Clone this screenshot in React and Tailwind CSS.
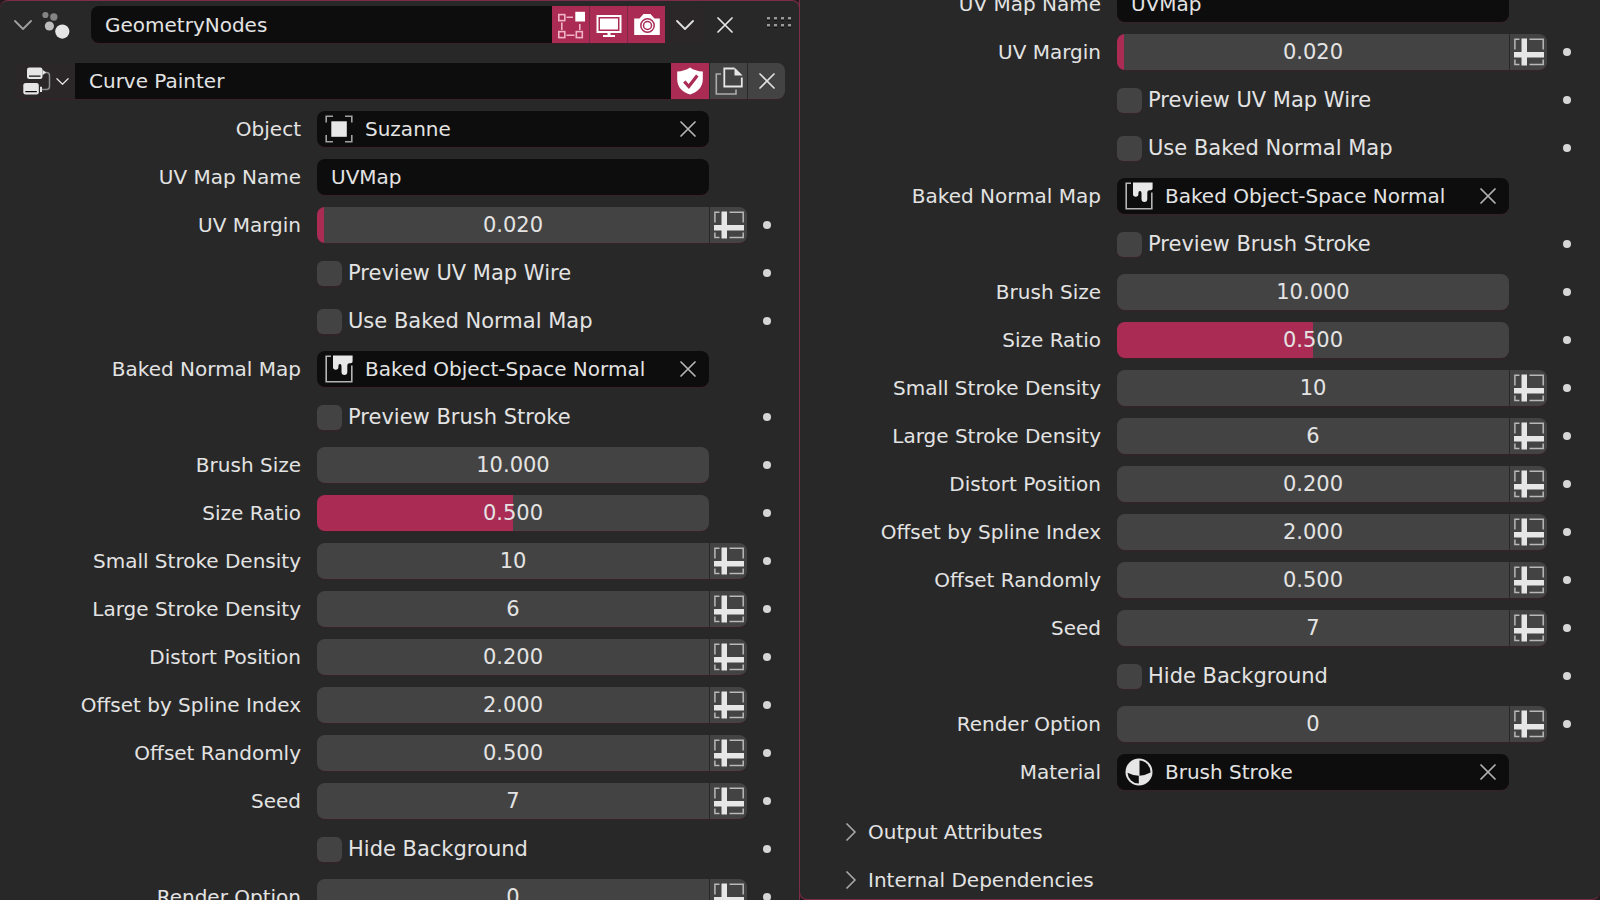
import React, { useId } from "react";

function Cross({ className = "" }) {
  return (
    <svg viewBox="0 0 16 16" className={`size-4 shrink-0 ${className}`} fill="none" stroke="currentColor" strokeWidth="1.7" strokeLinecap="round" aria-hidden="true">
      <path d="M1 1L15 15M15 1L1 15" />
    </svg>
  );
}

function ChevronDown({ className = "" }) {
  return (
    <svg viewBox="0 0 18 10" className={`shrink-0 ${className}`} fill="none" stroke="currentColor" strokeWidth="1.8" strokeLinecap="round" strokeLinejoin="round" aria-hidden="true">
      <path d="M1 1L9 9L17 1" />
    </svg>
  );
}

function ChevronRight() {
  return (
    <svg viewBox="0 0 10 18" className="h-[18px] w-[10px] shrink-0 text-[#a8a8a8]" fill="none" stroke="currentColor" strokeWidth="1.7" strokeLinecap="round" strokeLinejoin="round" aria-hidden="true">
      <path d="M1 1L9 9L1 17" />
    </svg>
  );
}

function ParticlesIcon() {
  return (
    <svg viewBox="0 0 28 28" className="size-7 shrink-0" aria-hidden="true">
      <circle cx="3.4" cy="4" r="3.1" fill="#848484" />
      <circle cx="11.8" cy="6" r="3.7" fill="#848484" />
      <circle cx="7.4" cy="15" r="4.6" fill="#bdbdbd" />
      <circle cx="20.3" cy="20.6" r="7.1" fill="#e6e6e6" />
    </svg>
  );
}

function EditModeIcon() {
  return (
    <svg viewBox="0 0 28 28" className="size-7" fill="none" stroke="#f0b4c6" strokeWidth="1.6" aria-hidden="true">
      <rect x="1.8" y="3.6" width="6" height="6" />
      <rect x="1.8" y="20.6" width="6" height="6" />
      <rect x="19.3" y="20.6" width="6" height="6" />
      <path d="M9.5 6.3H16M4.8 11.5V19M9.5 24.3H17.5M22.8 13V19" />
      <rect x="18.3" y="0.8" width="9.700" height="9.700" fill="#fff" stroke="none" />
    </svg>
  );
}

function MonitorIcon() {
  return (
    <svg viewBox="0 0 28 28" className="size-7" aria-hidden="true">
      <path fill="#fff" fillRule="evenodd" d="M1.5 4H26.500V22H1.500ZM3.500 6V20H24.500V6Z" />
      <path fill="#fff" d="M5 7.500H23V18.500H5ZM12.500 22H15.500V24H20V26H8V24H12.500Z" />
    </svg>
  );
}

function CameraIcon() {
  return (
    <svg viewBox="0 0 28 28" className="size-7" aria-hidden="true">
      <path fill="#fff" d="M1.200 7.500H6.500L10.500 3H17.500L21.500 7.500H26.800V24H1.200Z" />
      <circle cx="14.500" cy="14.500" r="6.700" fill="none" stroke="#aa2c55" strokeWidth="1.500" />
      <circle cx="14.500" cy="14.500" r="4" fill="none" stroke="#aa2c55" strokeWidth="1.500" />
    </svg>
  );
}

function GripIcon() {
  const columns = [1.5, 8.5, 15.500, 22.500];
  return (
    <svg viewBox="0 0 24 11" className="h-[11px] w-6 shrink-0" aria-hidden="true">
      {columns.map((x) => (
        <g key={x}>
          <path d={`M${x - 1.5} 2h3v2h-3zM${x - 1.5} 9h3v2h-3z`} fill="#101010" />
          <path d={`M${x - 1.5} 0h3v2.500h-3zM${x - 1.5} 7h3v2.500h-3z`} fill="#999" />
        </g>
      ))}
    </svg>
  );
}

function NodeTreeIcon() {
  return (
    <svg viewBox="0 0 28 28" className="size-7 shrink-0" aria-hidden="true">
      <path d="M20 5.500H23.500Q26.500 5.500 26.500 8.500V19.500Q26.500 22.500 23.500 22.500H18" fill="none" stroke="#8c8c8c" strokeWidth="1.500" />
      <path d="M19.500 2.800L23.200 5.500L19.500 8.200ZM17 19.800H19V25H17Z" fill="#e6e6e6" />
      <rect x="4" y="0.500" width="15.500" height="11.500" rx="2.300" fill="#e6e6e6" />
      <rect x="0.300" y="16" width="15.500" height="11.500" rx="2.300" fill="#e6e6e6" />
      <path d="M6 9.200H17.500M2.300 24.700H13.800" stroke="#111" strokeWidth="1.300" />
    </svg>
  );
}

function ShieldIcon() {
  return (
    <svg viewBox="0 0 28 28" className="size-7" aria-hidden="true">
      <path fill="#fff" d="M14 0.500C10.500 3 6 4.300 1.200 4.500V12C1.200 20 6.500 25.500 14 27.500C21.500 25.500 26.800 20 26.800 12V4.500C22 4.300 17.500 3 14 0.500Z" />
      <path d="M8.300 14.500L12.800 19.500L21.300 8.500" fill="none" stroke="#aa2c55" strokeWidth="3.200" />
    </svg>
  );
}

function DuplicateIcon() {
  return (
    <svg viewBox="0 0 28 28" className="size-7" fill="none" aria-hidden="true">
      <path d="M6 7H1.300V27H21V22.500" stroke="#adadad" strokeWidth="1.600" />
      <path d="M19.500 1.500H9.300V19.500H26.800V10.500" stroke="#e6e6e6" strokeWidth="1.800" />
      <path d="M19.500 0.600V8.600H27.700Z" fill="#e6e6e6" />
    </svg>
  );
}

function ObjectIcon() {
  return (
    <svg viewBox="0 0 28 28" className="size-7 shrink-0" aria-hidden="true">
      <path d="M8 1.200H1.200V7.500M20 1.200H26.800V7.500M8 26.800H1.200V20M20 26.800H26.800V20" fill="none" stroke="#a2a2a2" strokeWidth="1.600" />
      <rect x="6.300" y="6.300" width="15.500" height="15.500" fill="#e8e8e8" />
    </svg>
  );
}

function TextureIcon() {
  return (
    <svg viewBox="0 0 28 28" className="size-7 shrink-0" aria-hidden="true">
      <path d="M6 1.300H1.200V26.800H26.800V10.500" fill="none" stroke="#b4b4b4" strokeWidth="1.600" />
      <path fill="#e8e8e8" d="M8 0.500H27.600V6.500Q27.600 8.300 25.500 8.300H24.500Q22.300 8.300 22.300 10.500V17A2.900 2.900 0 0 1 16.500 17V11Q16.500 9 14.900 9Q13.400 9 13.400 11V12A2.700 2.700 0 0 1 8 12Z" />
    </svg>
  );
}

function MaterialIcon() {
  return (
    <svg viewBox="0 0 28 28" className="size-7 shrink-0" aria-hidden="true">
      <circle cx="14" cy="14" r="13.500" fill="#e6e6e6" />
      <path d="M14.500 2.500A11.600 11.600 0 0 1 25.500 14.500Q20 17.500 14.500 17.700Z" fill="#0d0d0d" />
      <path d="M2.500 14.800Q8 17.700 13.800 17.800V25.600A11.600 11.600 0 0 1 2.500 14.800Z" fill="#0d0d0d" />
    </svg>
  );
}

function AttributeIcon() {
  return (
    <svg viewBox="0 0 30 28" className="h-7 w-[30px]" aria-hidden="true">
      <path d="M5.500 1.300H0.900V11.500M15.500 1.300H29.200V11.500M0.900 21.500V26.600H5.500M15.500 26.600H29.200V21.500" fill="none" stroke="#b8b8b8" strokeWidth="1.500" />
      <path fill="#e6e6e6" d="M7.500 0.500H13V14H30V19.500H13V27.400H7.500V19.500H0V14H7.500Z" />
    </svg>
  );
}

const rowGrid = "grid h-9 grid-cols-[317fr_392fr_38px_40px] items-center";
const rowLabel = "pr-4 text-right whitespace-nowrap";
const edge = "shadow-[0_1px_0_#3a2129]";

const fills = {
  none: "bg-[#434343]",
  sliver: "bg-[linear-gradient(to_right,#aa2c55_7px,#434343_7px)]",
  half: "bg-[linear-gradient(to_right,#aa2c55_50%,#434343_50%)]",
};

function Dot() {
  return (
    <button type="button" aria-label="Animate property" className="col-start-4 mx-auto flex size-5 items-center justify-center">
      <span className="size-2 rounded-full bg-[#d6d6d6]" />
    </button>
  );
}

function NumberRow({ label, value, fill = "none", attribute = false }) {
  const id = useId();
  return (
    <div className={rowGrid}>
      <label htmlFor={id} className={rowLabel}>{label}</label>
      <input
        id={id}
        type="text"
        inputMode="decimal"
        defaultValue={value}
        className={`h-9 w-full min-w-0 text-center text-[21px] outline-none ${edge} ${fills[fill]} ${attribute ? "rounded-l-lg" : "rounded-lg"}`}
      />
      {attribute && (
        <button type="button" aria-label={`Use attribute for ${label}`} className={`ml-px flex h-9 items-center justify-center rounded-r-lg bg-[#434343] ${edge}`}>
          <AttributeIcon />
        </button>
      )}
      <Dot />
    </div>
  );
}

function CheckRow({ label }) {
  const id = useId();
  return (
    <div className={rowGrid}>
      <div className="col-start-2 flex items-center gap-1.5">
        <input id={id} type="checkbox" className={`size-[25px] shrink-0 appearance-none rounded-md bg-[#434343] checked:bg-[#aa2c55] ${edge}`} />
        <label htmlFor={id} className="text-[21px] whitespace-nowrap">{label}</label>
      </div>
      <Dot />
    </div>
  );
}

function DataRow({ label, value, icon }) {
  const id = useId();
  return (
    <div className={rowGrid}>
      <label htmlFor={id} className={rowLabel}>{label}</label>
      <div className={`flex h-9 min-w-0 items-center rounded-lg bg-[#0d0d0d] ${edge} ${icon ? "pr-3 pl-2" : "px-3.5"}`}>
        {icon}
        <input id={id} type="text" defaultValue={value} className={`w-full min-w-0 flex-1 bg-transparent outline-none ${icon ? "ml-3" : ""}`} />
        {icon && (
          <button type="button" aria-label={`Clear ${label}`} className="ml-1 p-px text-[#b4b4b4]">
            <Cross />
          </button>
        )}
      </div>
    </div>
  );
}

function SharedRows() {
  return (
    <>
      <DataRow label="UV Map Name" value="UVMap" />
      <NumberRow label="UV Margin" value="0.020" fill="sliver" attribute />
      <CheckRow label="Preview UV Map Wire" />
      <CheckRow label="Use Baked Normal Map" />
      <DataRow label="Baked Normal Map" value="Baked Object-Space Normal" icon={<TextureIcon />} />
      <CheckRow label="Preview Brush Stroke" />
      <NumberRow label="Brush Size" value="10.000" />
      <NumberRow label="Size Ratio" value="0.500" fill="half" />
      <NumberRow label="Small Stroke Density" value="10" attribute />
      <NumberRow label="Large Stroke Density" value="6" attribute />
      <NumberRow label="Distort Position" value="0.200" attribute />
      <NumberRow label="Offset by Spline Index" value="2.000" attribute />
      <NumberRow label="Offset Randomly" value="0.500" attribute />
      <NumberRow label="Seed" value="7" attribute />
      <CheckRow label="Hide Background" />
      <NumberRow label="Render Option" value="0" attribute />
      <DataRow label="Material" value="Brush Stroke" icon={<MaterialIcon />} />
    </>
  );
}

function ModeButton({ label, children }) {
  return (
    <button type="button" aria-label={label} className="flex w-[37px] items-center justify-center bg-[#aa2c55]">
      {children}
    </button>
  );
}

function ModifierHeader() {
  return (
    <header className="flex h-[37px] shrink-0 items-center pr-2 pl-3.5">
      <button type="button" aria-label="Collapse modifier" className="text-[#a0a0a0]">
        <ChevronDown className="h-2.5 w-[18px]" />
      </button>
      <div className="mr-[21px] ml-2.5">
        <ParticlesIcon />
      </div>
      <div className={`flex h-full min-w-0 flex-1 gap-px rounded-l-lg bg-[#0d0d0d] ${edge}`}>
        <input type="text" aria-label="Modifier name" defaultValue="GeometryNodes" className="min-w-0 flex-1 bg-transparent pl-3.5 outline-none" />
        <div className="flex gap-px bg-[#7c2a46]">
          <ModeButton label="Edit mode"><EditModeIcon /></ModeButton>
          <ModeButton label="Realtime"><MonitorIcon /></ModeButton>
          <ModeButton label="Render"><CameraIcon /></ModeButton>
        </div>
      </div>
      <button type="button" aria-label="Modifier options" className="flex h-full w-10 items-center justify-center rounded-r-lg bg-[#2b2728] text-[#e0e0e0]">
        <ChevronDown className="h-2.5 w-[18px]" />
      </button>
      <button type="button" aria-label="Remove modifier" className="flex h-full w-10 items-center justify-center text-[#e6e6e6]">
        <Cross />
      </button>
      <div className="ml-[22px] pb-1">
        <GripIcon />
      </div>
    </header>
  );
}

function NodeGroupBar() {
  return (
    <div className={`mr-3.5 ml-[15px] flex h-9 rounded-lg ${edge}`}>
      <button type="button" aria-label="Browse node groups" className="flex w-[60px] items-center gap-[5px] rounded-l-lg bg-[#2b2728] pl-2 text-[#e0e0e0]">
        <NodeTreeIcon />
        <ChevronDown className="h-[7px] w-[13px]" />
      </button>
      <input type="text" aria-label="Node group name" defaultValue="Curve Painter" className="min-w-0 flex-1 bg-[#0d0d0d] pl-3.5 outline-none" />
      <div className="flex gap-px">
        <button type="button" aria-label="Fake user" className="flex w-[38px] items-center justify-center bg-[#aa2c55]">
          <ShieldIcon />
        </button>
        <button type="button" aria-label="Duplicate node group" className="flex w-[37px] items-center justify-center bg-[#434343]">
          <DuplicateIcon />
        </button>
        <button type="button" aria-label="Unlink node group" className="flex w-[37px] items-center justify-center rounded-r-lg bg-[#434343] text-[#e0e0e0]">
          <Cross />
        </button>
      </div>
    </div>
  );
}

function SubPanel({ label }) {
  return (
    <button type="button" className="flex h-9 items-center gap-3 pl-[46px] text-left">
      <ChevronRight />
      {label}
    </button>
  );
}

export default function App() {
  return (
    <main className="grid h-screen grid-cols-2 overflow-hidden bg-[#241a1e] font-['DejaVu_Sans',sans-serif] text-[20px] leading-6 text-[#e3e3e3]">
      <section aria-label="Modifier" className="flex flex-col overflow-hidden rounded-t-lg border-t border-r border-[#7d2c49] bg-[#282828] pt-[5px]">
        <ModifierHeader />
        <div className="mt-5 flex flex-col gap-3">
          <NodeGroupBar />
          <div className="flex flex-col gap-3 pr-3">
            <DataRow label="Object" value="Suzanne" icon={<ObjectIcon />} />
            <SharedRows />
          </div>
        </div>
      </section>
      <section aria-label="Modifier, continued" className="-ml-px flex flex-col justify-end overflow-hidden rounded-b-lg border-b border-l border-[#7d2c49] bg-[#282828] pb-px">
        <div className="flex flex-col gap-3 pr-[13px]">
          <SharedRows />
        </div>
        <div className="mt-6 flex flex-col gap-3">
          <SubPanel label="Output Attributes" />
          <SubPanel label="Internal Dependencies" />
        </div>
      </section>
    </main>
  );
}
